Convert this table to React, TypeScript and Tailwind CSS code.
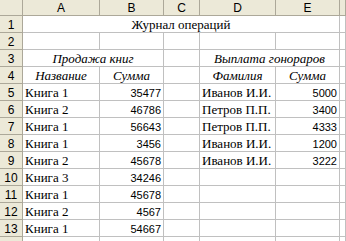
import React from "react";

const books: [string, string][] = [
  ["Книга 1", "35477"],
  ["Книга 2", "46786"],
  ["Книга 1", "56643"],
  ["Книга 1", "3456"],
  ["Книга 2", "45678"],
  ["Книга 3", "34246"],
  ["Книга 1", "45678"],
  ["Книга 2", "4567"],
  ["Книга 1", "54667"],
];

const fees: [string, string][] = [
  ["Иванов И.И.", "5000"],
  ["Петров П.П.", "3400"],
  ["Петров П.П.", "4333"],
  ["Иванов И.И.", "1200"],
  ["Иванов И.И.", "3222"],
];

const serifCls = "font-['Liberation_Serif','DejaVu_Serif','Times_New_Roman',serif]";
const sansCls = "font-['Liberation_Sans',Arial,sans-serif]";

const hdr =
  "bg-[#ece9d8] border-r border-b border-[#aca899] flex items-center justify-center text-[12px] text-black leading-none font-['Liberation_Sans',Arial,sans-serif]";
const cell = "border-r border-b border-[#c0c0c0] bg-white flex items-end overflow-visible whitespace-nowrap text-black";

function RowHead({ n }: { n: number }) {
  return (
    <div className={hdr}>
      <span className="pt-[1px]">{n}</span>
    </div>
  );
}

function TextCell({ text, className = "" }: { text?: string; className?: string }) {
  return (
    <div className={`${cell} ${className}`}>
      {text ? (
        <span className={`pl-[2px] text-[13px] leading-[13px] mb-[1px] ${serifCls}`}>{text}</span>
      ) : null}
    </div>
  );
}

function NumCell({ text }: { text?: string }) {
  return (
    <div className={`${cell} justify-end`}>
      {text ? (
        <span className={`pr-[2px] text-[11px] leading-[12px] mb-[1px] ${sansCls}`}>{text}</span>
      ) : null}
    </div>
  );
}

function ItalicCell({ text, className = "" }: { text: string; className?: string }) {
  return (
    <div className={`${cell} justify-center ${className}`}>
      <span className={`italic text-[13px] leading-[13px] mb-[1px] ${serifCls}`}>{text}</span>
    </div>
  );
}

export default function App() {
  const rows = [];
  for (let i = 0; i < 9; i++) {
    const r = i + 5;
    const b = books[i];
    const f = fees[i];
    rows.push(
      <React.Fragment key={r}>
        <RowHead n={r} />
        <TextCell text={b[0]} />
        <NumCell text={b[1]} />
        <TextCell />
        <TextCell text={f ? f[0] : undefined} />
        <NumCell text={f ? f[1] : undefined} />
        <TextCell />
      </React.Fragment>
    );
  }
  return (
    <div className="w-[346px] h-[241px] overflow-hidden bg-white">
      <div className="grid grid-cols-[23px_77px_64px_36px_76px_64px_1fr] grid-rows-[16px_repeat(14,17px)]">
        <div className={hdr} />
        {["A", "B", "C", "D", "E", ""].map((c, i) => (
          <div key={i} className={hdr}>
            <span className="pt-[1px]">{c}</span>
          </div>
        ))}

        <RowHead n={1} />
        <div className={`${cell} col-span-5 justify-center`}>
          <span className={`text-[13px] leading-[13px] mb-[1px] ${serifCls}`}>Журнал операций</span>
        </div>
        <TextCell />

        <RowHead n={2} />
        <TextCell />
        <TextCell />
        <TextCell />
        <TextCell />
        <TextCell />
        <TextCell />

        <RowHead n={3} />
        <ItalicCell text="Продажа книг" className="col-span-2" />
        <TextCell />
        <ItalicCell text="Выплата гонораров" className="col-span-2" />
        <TextCell />

        <RowHead n={4} />
        <ItalicCell text="Название" />
        <ItalicCell text="Сумма" />
        <TextCell />
        <ItalicCell text="Фамилия" />
        <ItalicCell text="Сумма" />
        <TextCell />

        {rows}

        <RowHead n={14} />
        <TextCell />
        <TextCell />
        <TextCell />
        <TextCell />
        <TextCell />
        <TextCell />
      </div>
    </div>
  );
}
